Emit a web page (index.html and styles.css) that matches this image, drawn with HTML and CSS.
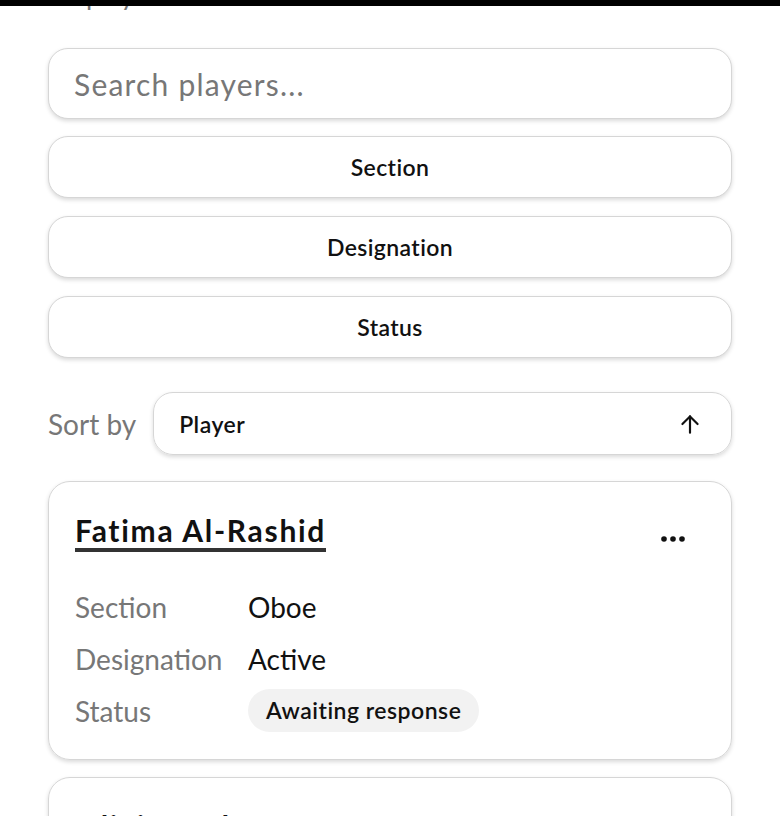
FILE: index.html
```html
<!DOCTYPE html>
<html lang="en">
<head>
    <meta charset="UTF-8">
    <meta name="viewport" content="width=device-width, initial-scale=1.0">
    <title>Players</title>
    <link rel="stylesheet" href="styles.css">
</head>
<body>
    <div class="topbar"></div>

    <div class="page">
        <div class="count">All players</div>

        <input class="search" type="text" placeholder="Search players...">

        <button class="filter-btn">Section</button>
        <button class="filter-btn">Designation</button>
        <button class="filter-btn">Status</button>

        <div class="sort-row">
            <span class="sort-label">Sort by</span>
            <div class="sort-select">
                <span>Player</span>
                <svg width="26" height="26" viewBox="0 0 24 24" fill="none" stroke="#111" stroke-width="2" stroke-linecap="round" stroke-linejoin="round">
                    <path d="M12 20V5"/>
                    <path d="M5 12l7-7 7 7"/>
                </svg>
            </div>
        </div>

        <div class="card">
            <div class="card-head">
                <a class="player-name" href="#">Fatima Al-Rashid</a>
                <button class="more-btn">
                    <svg width="26" height="8" viewBox="0 0 26 8" fill="#111">
                        <circle cx="4" cy="4" r="2.8"/>
                        <circle cx="13" cy="4" r="2.8"/>
                        <circle cx="22" cy="4" r="2.8"/>
                    </svg>
                </button>
            </div>
            <div class="details">
                <span class="label">Section</span>
                <span class="value">Oboe</span>
                <span class="label">Designation</span>
                <span class="value">Active</span>
                <span class="label">Status</span>
                <span><span class="pill">Awaiting response</span></span>
            </div>
        </div>

        <div class="card">
            <div class="card-head">
                <a class="player-name" href="#">Olivia Andersen</a>
            </div>
        </div>
    </div>
</body>
</html>
```

FILE: styles.css
```css
body {
    font-family: Lato, "Noto Sans", sans-serif;
    background-color: #fff;
    color: #111;
    margin: 0;
    padding: 0;
    overflow: hidden;
}

.topbar {
    position: fixed;
    top: 0;
    left: 0;
    right: 0;
    height: 6px;
    background: #000;
    z-index: 10;
}

.page {
    padding: 0 48px;
    display: flex;
    flex-direction: column;
}

.count {
    margin-top: -21px;
    line-height: 32px;
    font-size: 27px;
    color: #777;
    margin-bottom: 37px;
}

.search {
    height: 71px;
    box-sizing: border-box;
    border: 1.5px solid #d6d6d6;
    border-radius: 20px;
    box-shadow: 0 2px 4px rgba(0, 0, 0, 0.15);
    padding: 0 25px;
    font-family: inherit;
    font-size: 30px;
    letter-spacing: 1.2px;
    color: #111;
    outline: none;
    margin-bottom: 17px;
}

.search::placeholder {
    color: #777;
}

.filter-btn {
    height: 62px;
    background: #fff;
    border: 1.5px solid #d6d6d6;
    border-radius: 20px;
    box-shadow: 0 2px 4px rgba(0, 0, 0, 0.15);
    font-family: inherit;
    font-size: 23px;
    font-weight: 600;
    letter-spacing: 0.4px;
    color: #111;
    margin-bottom: 18px;
    cursor: pointer;
}

.sort-row {
    display: flex;
    align-items: center;
    gap: 17px;
    margin-top: 16px;
}

.sort-label {
    font-size: 28px;
    color: #777;
}

.sort-select {
    flex: 1;
    height: 63px;
    box-sizing: border-box;
    border: 1.5px solid #d6d6d6;
    border-radius: 20px;
    box-shadow: 0 2px 4px rgba(0, 0, 0, 0.15);
    display: flex;
    align-items: center;
    justify-content: space-between;
    padding: 0 28px 0 25px;
    font-size: 23px;
    font-weight: 600;
    letter-spacing: 0.5px;
}

.card {
    margin-top: 26px;
    border: 1.5px solid #d6d6d6;
    border-radius: 22px;
    box-shadow: 0 2px 4px rgba(0, 0, 0, 0.15);
    padding: 30px 26px 27px;
}

.card + .card {
    margin-top: 17px;
}

.card-head {
    display: flex;
    justify-content: space-between;
    align-items: flex-start;
}

.player-name {
    font-size: 30px;
    font-weight: 700;
    letter-spacing: 1.7px;
    color: #111;
    text-decoration: none;
    border-bottom: 4px solid #333;
    line-height: 1.2;
}

.more-btn {
    background: none;
    border: none;
    padding: 0;
    margin: 23px 19px 0 0;
    cursor: pointer;
    line-height: 0;
}

.details {
    display: grid;
    grid-template-columns: 173px auto;
    grid-auto-rows: 43px;
    row-gap: 9px;
    align-items: center;
    margin-top: 33px;
    font-size: 28px;
}

.label {
    color: #777;
}

.value {
    color: #111;
}

.pill {
    display: inline-block;
    background: #f2f2f2;
    border-radius: 22px;
    padding: 0 18px;
    line-height: 43px;
    font-size: 23px;
    font-weight: 600;
    letter-spacing: 0.5px;
}
```
